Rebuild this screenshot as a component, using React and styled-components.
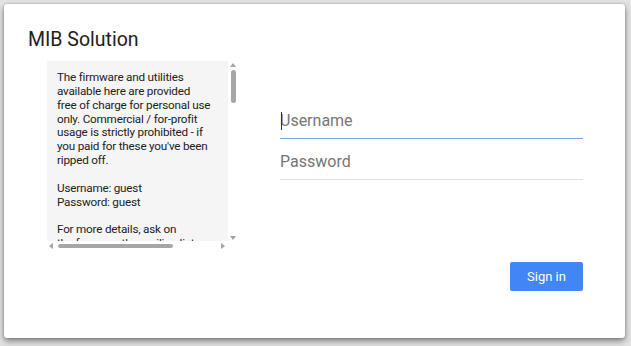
import React from 'react';
import styled, { createGlobalStyle } from 'styled-components';

const GlobalStyle = createGlobalStyle`
  html, body {
    margin: 0;
    padding: 0;
    background: #e3e3e3;
    font-family: Roboto, "Liberation Sans", Arial, sans-serif;
  }
  #root {
    padding: 4px 6px 8px 4px;
  }
`;

const notice = [
  'The firmware and utilities',
  'available here are provided',
  'free of charge for personal use',
  'only. Commercial / for-profit',
  'usage is strictly prohibited - if',
  "you paid for these you've been",
  'ripped off.',
  '',
  'Username: guest',
  'Password: guest',
  '',
  'For more details, ask on',
  'the forum or the mailing list.',
].join('\n');

const App = () => {
  return (
    <>
      <GlobalStyle />
      <Card>
        <Title>MIB Solution</Title>
        <Body>
          <NoticeBox>
            <NoticeText>{notice}</NoticeText>
            <VScroll>
              <Arrow dir="up" />
              <VThumb />
              <Spacer />
              <Arrow dir="down" />
            </VScroll>
            <HScroll>
              <Arrow dir="left" />
              <HThumb />
              <Spacer />
              <Arrow dir="right" />
            </HScroll>
          </NoticeBox>
          <Form>
            <Field active>
              <Caret />
              <Input type="text" placeholder="Username" />
            </Field>
            <Field>
              <Input type="password" placeholder="Password" />
            </Field>
            <Actions>
              <Button type="button">Sign in</Button>
            </Actions>
          </Form>
        </Body>
      </Card>
    </>
  );
};

const Card = styled.div`
  width: 621px;
  height: 334px;
  box-sizing: border-box;
  background: #fff;
  border-radius: 3px;
  box-shadow: 0 3px 6px rgba(0, 0, 0, 0.45), 0 0 2px rgba(0, 0, 0, 0.25);
  padding: 24px 42px 0 24px;
`;

const Title = styled.h1`
  margin: 0;
  font-size: 19.5px;
  line-height: 24px;
  font-weight: 400;
  color: #212121;
`;

const Body = styled.div`
  display: flex;
  margin-top: 9px;
  padding-left: 19px;
  gap: 42px;
`;

const NoticeBox = styled.div`
  display: grid;
  grid-template-columns: 181px 10px;
  grid-template-rows: 180px 10px;
  width: 191px;
  flex-shrink: 0;
`;

const NoticeText = styled.div`
  background: #f5f5f5;
  box-sizing: border-box;
  padding: 10px 10px 0 10px;
  font-size: 11.7px;
  letter-spacing: -0.2px;
  line-height: 13.85px;
  color: #222;
  white-space: pre;
  overflow: hidden;
`;

const VScroll = styled.div`
  display: flex;
  flex-direction: column;
  align-items: center;
  padding: 2px 0 1px;
`;

const HScroll = styled.div`
  display: flex;
  align-items: center;
  padding: 0 3px 0 2px;
`;

const Spacer = styled.div`
  flex: 1;
`;

const VThumb = styled.div`
  width: 5px;
  height: 33px;
  margin-top: 3px;
  border-radius: 3px;
  background: #a6a6a6;
`;

const HThumb = styled.div`
  width: 115px;
  height: 4px;
  margin-left: 5px;
  border-radius: 3px;
  background: #a6a6a6;
`;

const Arrow = styled.div`
  width: 0;
  height: 0;
  border: 3px solid transparent;
  ${({ dir }) =>
    dir === 'up'
      ? 'border-bottom: 4px solid #a3a3a3; border-top-width: 0;'
      : dir === 'down'
      ? 'border-top: 4px solid #a3a3a3; border-bottom-width: 0;'
      : dir === 'left'
      ? 'border-right: 4px solid #a3a3a3; border-left-width: 0;'
      : 'border-left: 4px solid #a3a3a3; border-right-width: 0;'}
`;

const Form = styled.div`
  display: flex;
  flex-direction: column;
  width: 303px;
  padding-top: 42px;
  gap: 5px;
`;

const Field = styled.div`
  position: relative;
  height: 36px;
  box-sizing: border-box;
  border-bottom: 1px solid ${({ active }) => (active ? '#7da2d8' : '#e0e0e0')};
  display: flex;
  align-items: center;
`;

const Input = styled.input`
  width: 100%;
  height: 100%;
  border: none;
  outline: none;
  padding: 0;
  background: transparent;
  font-family: Roboto, "Liberation Sans", Arial, sans-serif;
  font-size: 16px;
  color: #212121;

  &::placeholder {
    color: #757575;
  }
`;

const Caret = styled.span`
  position: absolute;
  left: 1px;
  top: 9px;
  width: 1px;
  height: 18px;
  background: #333;
`;

const Actions = styled.div`
  display: flex;
  justify-content: flex-end;
  margin-top: 77px;
`;

const Button = styled.button`
  width: 73px;
  height: 29px;
  border: none;
  border-radius: 2px;
  background: #4285f4;
  color: #fff;
  font-family: Roboto, "Liberation Sans", Arial, sans-serif;
  font-size: 13px;
  padding: 0;
  cursor: pointer;
`;

export default App;
